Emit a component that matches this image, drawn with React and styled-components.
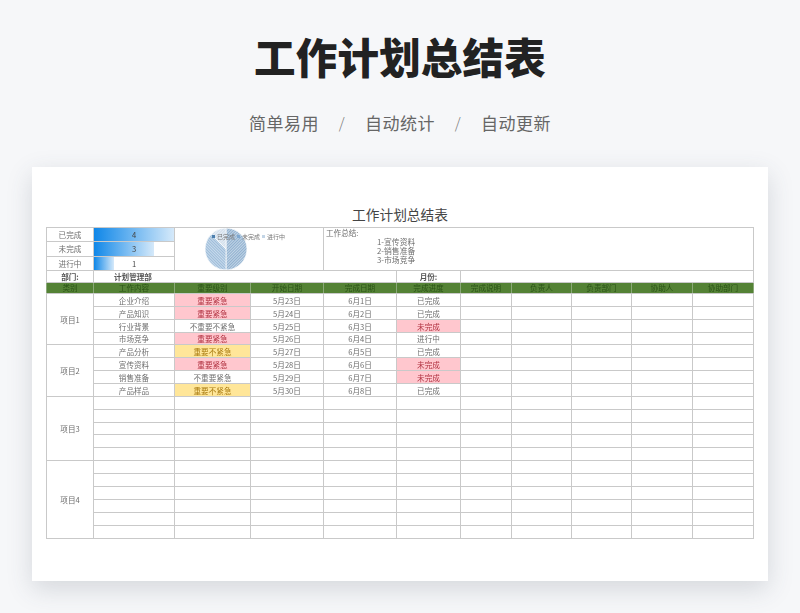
import React from 'react';
import styled, { createGlobalStyle } from 'styled-components';

const GlobalStyle = createGlobalStyle`
  html, body { margin: 0; padding: 0; }
  body {
    background: #f6f7f9;
    font-family: "Noto Sans CJK SC", "Liberation Sans", sans-serif;
  }
`;

const Page = styled.div`
  width: 800px;
  height: 613px;
  overflow: hidden;
  display: flex;
  flex-direction: column;
  align-items: center;
`;

const Title = styled.h1`
  margin: 28px 0 0;
  height: 56px;
  font-size: 41.5px;
  line-height: 56px;
  letter-spacing: 0.2px;
  font-weight: 900;
  color: #222;
`;

const Tags = styled.div`
  margin-top: 27px;
  height: 24px;
  display: flex;
  align-items: center;
  gap: 19px;
  font-size: 17px;
  line-height: 24px;
  letter-spacing: 0.5px;
  color: #666;
`;

const Slash = styled.span`
  width: 8px;
  text-align: center;
  font-size: 15px;
  font-weight: 300;
  color: #777;
`;

const Card = styled.div`
  margin-top: 32px;
  width: 736px;
  height: 414px;
  box-sizing: border-box;
  padding: 39px 14px 0;
  background: #fff;
  box-shadow: 0 8px 24px rgba(60, 70, 90, 0.18);
`;

const SheetTitle = styled.div`
  height: 21px;
  text-align: center;
  font-size: 13.7px;
  line-height: 16px;
  color: #444;
`;

const Sheet = styled.table`
  width: 707px;
  table-layout: fixed;
  border-collapse: collapse;
  font-size: 7.6px;
  color: #6e6e6e;
  line-height: 9px;
  text-align: center;
  filter: blur(0.25px);

  td, th {
    padding: 0;
    border: 1px solid #c9c9c9;
    overflow: hidden;
    white-space: nowrap;
    font-weight: 400;
  }
`;

const Row = styled.tr`
  height: ${(p) => p.$h}px;
`;

const DataBar = styled.td`
  background-image: linear-gradient(90deg, #0f87e8, #d5e9fa);
  background-repeat: no-repeat;
  background-size: ${(p) => p.$pct}% 100%;
  color: #444;
`;

const ChartCell = styled.td`
  position: relative;
  vertical-align: top;
`;

const Pie = styled.svg`
  display: block;
  margin: 0 0 0 29px;
`;

const Legend = styled.div`
  position: absolute;
  top: 4px;
  left: 37px;
  display: flex;
  gap: 2px;
  font-size: 6px;
  line-height: 9px;
  color: #777;
`;

const LegendItem = styled.span`
  display: flex;
  align-items: center;
  gap: 2px;

  &::before {
    content: '';
    width: 3px;
    height: 3px;
    background: ${(p) => p.$color};
  }
`;

const Summary = styled.td`
  text-align: left;
  vertical-align: top;
`;

const SummaryHead = styled.div`
  padding: 1px 0 0 2px;
  line-height: 8px;
`;

const SummaryList = styled.div`
  padding-left: 53px;
  line-height: 9px;
  font-size: 7.8px;
  white-space: pre-line;
`;

const Bold = styled.td`
  font-weight: 700 !important;
  color: #555;
`;

const DeptName = styled(Bold)`
  text-align: left;
  padding-left: 20px !important;
`;

const HeadRow = styled.tr`
  height: 11.5px;
  background: #548235;

  th {
    color: #2a5316;
    border-color: #8aa878;
    border-top-color: #c9c9c9;
    border-bottom-color: #c9c9c9;
  }
`;

const tones = {
  red: 'background: #ffc7ce; color: #b0303f;',
  yellow: 'background: #ffe699; color: #a87a10;',
  none: '',
};

const Tone = styled.td`
  ${(p) => tones[p.$tone || 'none']}
`;

const colWidths = [47, 81, 76, 73, 73, 64, 51, 60, 60, 61, 61];
const heads = ['类别', '工作内容', '重要级别', '开始日期', '完成日期', '完成进度', '完成说明', '负责人', '负责部门', '协助人', '协助部门'];

const stats = [
  { label: '已完成', value: 4 },
  { label: '未完成', value: 3 },
  { label: '进行中', value: 1 },
];

const levelTone = { 重要紧急: 'red', 重要不紧急: 'yellow' };

const groups = [
  {
    name: '项目1',
    heights: [13, 13, 13, 12],
    rows: [
      ['企业介绍', '重要紧急', '5月23日', '6月1日', '已完成'],
      ['产品知识', '重要紧急', '5月24日', '6月2日', '已完成'],
      ['行业背景', '不重要不紧急', '5月25日', '6月3日', '未完成'],
      ['市场竞争', '重要紧急', '5月26日', '6月4日', '进行中'],
    ],
  },
  {
    name: '项目2',
    heights: [13, 13, 13, 13],
    rows: [
      ['产品分析', '重要不紧急', '5月27日', '6月5日', '已完成'],
      ['宣传资料', '重要紧急', '5月28日', '6月6日', '未完成'],
      ['销售准备', '不重要紧急', '5月29日', '6月7日', '未完成'],
      ['产品样品', '重要不紧急', '5月30日', '6月8日', '已完成'],
    ],
  },
  { name: '项目3', heights: [13, 13, 12, 13, 13], rows: Array(5).fill([]) },
  { name: '项目4', heights: [13, 13, 13, 13, 13, 13], rows: Array(6).fill([]) },
];

function PieChart() {
  return (
    <Pie width="44" height="42" viewBox="0 0 44 42">
      <defs>
        <pattern id="hatchA" width="2" height="2" patternUnits="userSpaceOnUse" patternTransform="rotate(45)">
          <rect width="2" height="2" fill="#c3d5e6" />
          <rect width="1" height="2" fill="#8fb0cf" />
        </pattern>
        <pattern id="hatchB" width="2" height="2" patternUnits="userSpaceOnUse" patternTransform="rotate(-45)">
          <rect width="2" height="2" fill="#c9dbec" />
          <rect width="1" height="2" fill="#9dbcd9" />
        </pattern>
        <pattern id="hatchC" width="2" height="2" patternUnits="userSpaceOnUse" patternTransform="rotate(45)">
          <rect width="2" height="2" fill="#e6edf5" />
          <rect width="1" height="2" fill="#d0deeb" />
        </pattern>
      </defs>
      <path d="M22 21 L22 0 A21 21 0 0 1 22 42 Z" fill="url(#hatchA)" stroke="#fff" strokeWidth="0.7" />
      <path d="M22 21 L22 42 A21 21 0 0 1 7.15 6.15 Z" fill="url(#hatchB)" stroke="#fff" strokeWidth="0.7" />
      <path d="M22 21 L7.15 6.15 A21 21 0 0 1 22 0 Z" fill="url(#hatchC)" stroke="#fff" strokeWidth="0.7" />
    </Pie>
  );
}

export default function App() {
  return (
    <Page>
      <GlobalStyle />
      <Title>工作计划总结表</Title>
      <Tags>
        <span>简单易用</span>
        <Slash>/</Slash>
        <span>自动统计</span>
        <Slash>/</Slash>
        <span>自动更新</span>
      </Tags>
      <Card>
        <SheetTitle>工作计划总结表</SheetTitle>
        <Sheet>
          <colgroup>
            {colWidths.map((w, i) => <col key={i} style={{ width: w }} />)}
          </colgroup>
          <tbody>
            {stats.map((s, i) => (
              <Row $h={14.3} key={s.label}>
                <td>{s.label}</td>
                <DataBar $pct={(s.value / 4) * 100}>{s.value}</DataBar>
                {i === 0 && (
                  <ChartCell colSpan={2} rowSpan={3}>
                    <PieChart />
                    <Legend>
                      <LegendItem $color="#4d7fae">已完成</LegendItem>
                      <LegendItem $color="#7fa8d0">未完成</LegendItem>
                      <LegendItem $color="#c3d5e6">进行中</LegendItem>
                    </Legend>
                  </ChartCell>
                )}
                {i === 0 && (
                  <Summary colSpan={7} rowSpan={3}>
                    <SummaryHead>工作总结:</SummaryHead>
                    <SummaryList>{'1-宣传资料\n2-销售准备\n3-市场竞争'}</SummaryList>
                  </Summary>
                )}
              </Row>
            ))}
            <Row $h={11.5}>
              <Bold>部门:</Bold>
              <DeptName colSpan={4}>计划管理部</DeptName>
              <Bold>月份:</Bold>
              <td colSpan={5} />
            </Row>
            <HeadRow>
              {heads.map((h) => <th key={h}>{h}</th>)}
            </HeadRow>
            {groups.map((g) => g.rows.map((r, i) => (
              <Row $h={g.heights[i]} key={g.name + i}>
                {i === 0 && <td rowSpan={g.rows.length}>{g.name}</td>}
                <td>{r[0]}</td>
                <Tone $tone={levelTone[r[1]]}>{r[1]}</Tone>
                <td>{r[2]}</td>
                <td>{r[3]}</td>
                <Tone $tone={r[4] === '未完成' ? 'red' : 'none'}>{r[4]}</Tone>
                <td /><td /><td /><td /><td />
              </Row>
            )))}
          </tbody>
        </Sheet>
      </Card>
    </Page>
  );
}
